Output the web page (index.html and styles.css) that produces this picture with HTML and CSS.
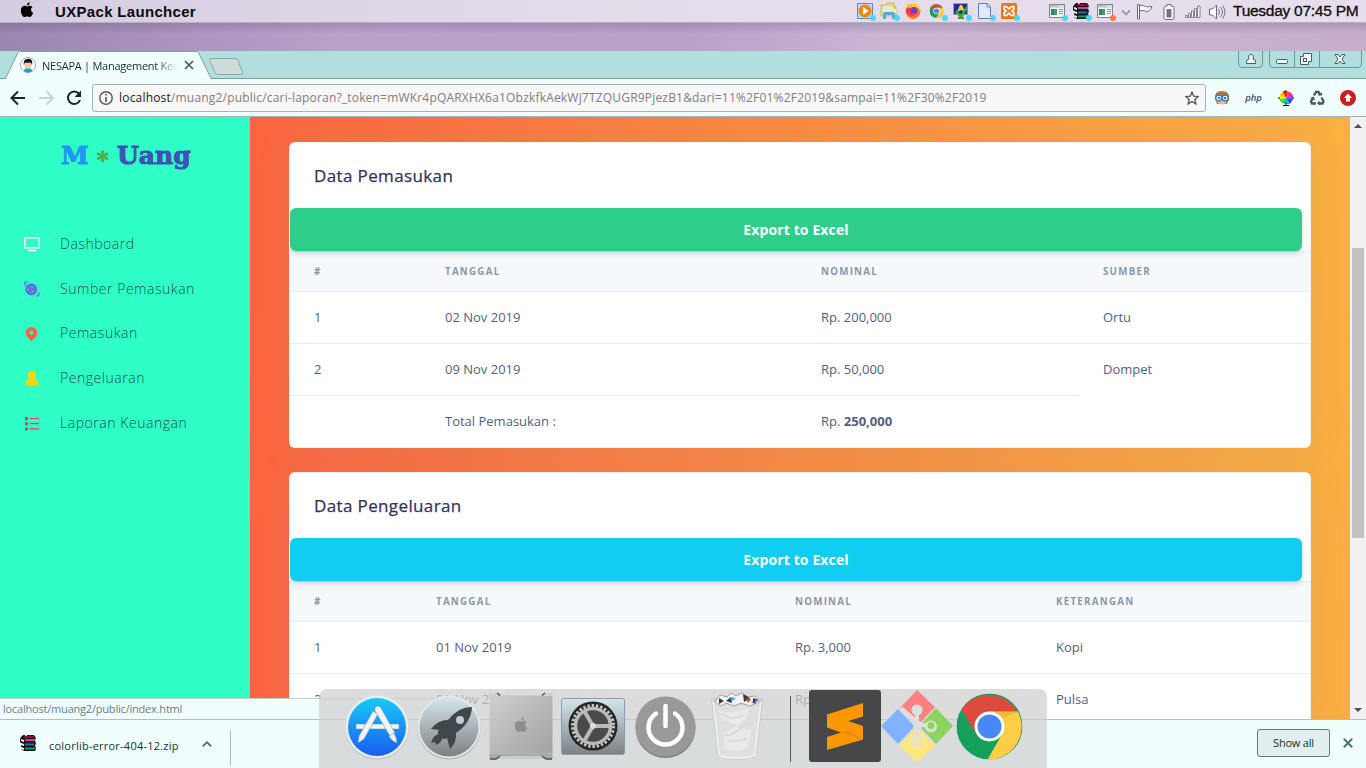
FILE: index.html
```html
<!DOCTYPE html>
<html lang="id">
<head>
<meta charset="utf-8">
<title>NESAPA | Management Keuangan</title>
<link rel="stylesheet" href="styles.css">
</head>
<body>
<svg class="defs" width="0" height="0">
  <defs>
    <symbol id="rar" viewBox="0 0 16 16">
      <path d="M1 2l2-2h11l2 3-1 2 1 4-1 1 1 4-1 2H4l-3-2V11l1-2-2-2V4z" fill="#151515"/>
      <path d="M3 1h10l2 2H5z" fill="#8c0c40"/><path d="M5 4h10v2H5z" fill="#d23a8a"/>
      <path d="M5 8.500h9v2H5z" fill="#1d6fb5"/><path d="M5 12.500h10v2H5z" fill="#189a5c"/>
      <path d="M1 4l3 1v2L1 6zM1 8l3 1v2l-3-1zM1 12l3 1v2l-3-1z" fill="#eee"/>
      <path d="M5 0h2v1H5z" fill="#ffd83a"/>
    </symbol>
    <symbol id="win" viewBox="0 0 18 16">
      <rect x="1.500" y="1.500" width="15" height="13" fill="#f6f8fa" stroke="#7d868d"/>
      <path d="M2 2h14v2.500H2z" fill="#b4c4cf"/><path d="M11 2.500h1.500V4H11zM14 2.500h1.500V4H14z" fill="#fff"/>
      <rect x="3" y="6" width="6" height="6" fill="#33788c"/><path d="M6 6h3v6H6z" fill="#4a9a5c"/>
      <path d="M11 6.500h4M11 8.500h4M11 10.500h4" stroke="#8a949c"/>
    </symbol>
    <symbol id="chrome" viewBox="0 0 66 66">
      <circle cx="33" cy="33" r="33" fill="#159f5c"/>
      <path d="M33 33L5 16A33 33 0 0 1 61 18H33z" fill="#dc4b3e"/>
      <path d="M33 18h28.500A33 33 0 0 1 31 66l14.500-25z" fill="#ffce44"/>
      <path d="M5 16L18.500 39 33 18z" fill="#dc4b3e"/>
      <path d="M33 18h29l-14 6z" fill="#d9a92f" opacity=".5"/>
      <circle cx="33" cy="33" r="15" fill="#fff"/><circle cx="33" cy="33" r="12" fill="#4688f4"/>
    </symbol>
    <symbol id="apple" viewBox="0 0 16 18">
      <path d="M11 0c.2 1.800-1.400 3.700-3.200 3.700C7.600 2 9.200.2 11 0zM8 4.900c.8 0 1.700-.9 3.200-.9 1.300 0 2.500.7 3.200 1.700-2.700 1.700-2.200 5.300.6 6.400-.7 2.100-2.200 4.900-3.900 4.900-1.100 0-1.600-.7-3-.7s-2 .7-3 .7C3.200 17 1 13.200 1 9.800 1 6.200 3.100 4.200 5.200 4.200c1.200 0 2.100.7 2.800.7z"/>
    </symbol>
  </defs>
</svg>

<header class="menubar">
  <svg class="apple" width="14" height="16"><use href="#apple"/></svg>
  <b class="appname">UXPack Launchcer</b>
  <div class="tray">
    <svg class="slot" viewBox="0 0 24 22"><rect x="4.500" y="3.500" width="15" height="15" fill="#b9dcf2" stroke="#5195c4"/><circle cx="12" cy="11" r="6.500" fill="#f6860f"/><path d="M10 7l5.500 4-5.500 4z" fill="#fff"/><circle class="run" cx="20" cy="18" r="3"/></svg>
    <svg class="slot" viewBox="0 0 24 22"><path d="M4 5h5l1-2h7v4h2v9H4z" fill="#efd77c" stroke="#c5a84b" stroke-width=".7"/><path d="M6 6h10v3H6z" fill="#d9f0d0"/><path d="M5 9h14v4H5z" fill="#f9eba9"/><path d="M6 19v-5q0-2 2-2h8q2 0 2 2v5h-3v-4H9v4z" fill="#59a7d8"/><circle class="run" cx="20" cy="18" r="3"/></svg>
    <svg class="slot" viewBox="0 0 24 22"><circle cx="12" cy="11.500" r="7.500" fill="#ff7a28"/><path d="M5 7l2-4 2 3 3-3q8 2 7.500 9-1-3-3-4-3-2-6 0z" fill="#ffc832"/><circle cx="12.500" cy="11" r="4" fill="#753bc4"/><path d="M5 9q3-2 6 0l-2 3q3 3 6 0-1 5-6 4-4-2-4-7z" fill="#ff3b4a"/></svg>
    <svg class="slot" viewBox="0 0 24 22"><use href="#chrome" x="4.500" y="4" width="14" height="14"/><circle class="run" cx="20" cy="18" r="3"/></svg>
    <svg class="slot" viewBox="0 0 24 22"><rect x="4.500" y="3.500" width="14" height="11" fill="#1d2f9a" stroke="#9ba0a8"/><path d="M9 17h6v2H9z" fill="#777"/><path d="M8 12l3-7h2l3 7-4-2z" fill="#f2d91d"/><path d="M7 11l5 6 6-10" fill="none" stroke="#2fae2b" stroke-width="2.500"/><circle class="run" cx="20" cy="18" r="3"/></svg>
    <svg class="slot" viewBox="0 0 24 22"><path d="M5.500 3.500h9l3 3v12h-12z" fill="#dceafd" stroke="#5b81b5"/><path d="M14 3.500V7h3.500" fill="#fff" stroke="#5b81b5"/><circle class="run" cx="20" cy="18" r="3"/></svg>
    <svg class="slot" viewBox="0 0 24 22"><rect x="4" y="3" width="16" height="16" rx="1.500" fill="#ee7416"/><path d="M7.200 6.500h2.300l2.500 2.300 2.500-2.300h2.300v2.800L15 11l1.800 1.700v2.800h-2.300L12 13.200l-2.500 2.300H7.200v-2.800L9 11 7.200 9.300z" fill="none" stroke="#fff" stroke-width="1.700"/><circle class="run" cx="20" cy="18" r="3"/></svg>
    <span class="slot"></span>
    <svg class="slot" viewBox="0 0 24 22"><use href="#win" x="3" y="3" width="18" height="16"/><circle class="run" cx="20" cy="18" r="3"/></svg>
    <svg class="slot" viewBox="0 0 24 22"><use href="#rar" x="4" y="3" width="16" height="16"/><circle class="run" cx="20" cy="18" r="3"/></svg>
    <svg class="slot" viewBox="0 0 24 22"><use href="#win" x="3" y="3" width="18" height="16"/><circle class="run alert" cx="20" cy="18" r="3"/></svg>
    <svg class="chev" viewBox="0 0 16 22"><path d="M5 10.500l4 4 4-4" fill="none" stroke="#9b98a2" stroke-width="1.800"/></svg>
    <svg class="slot" viewBox="0 0 24 22"><path d="M4.500 4.500h2V19h-2zM6.500 6q3-1.500 5 .2 2 1.400 7.500.3-1 3.500-4 5-2 .5-3.500-.8-2-.7-5 .3z" fill="#fff" stroke="#6b6870"/></svg>
    <svg class="slot" viewBox="0 0 24 22"><path d="M10 4.500h4v1.700h1.500q1.500 0 1.500 1.500V18q0 1.500-1.500 1.500h-7Q7 19.500 7 18V7.700q0-1.500 1.500-1.500H10z" fill="#fff" stroke="#6b6870"/><rect x="9.500" y="9" width="5" height="8.500" fill="#77747c"/></svg>
    <svg class="slot" viewBox="0 0 24 22"><path d="M4.500 15.500h2v2h-2zM7.500 13.500h2v4h-2zM10.500 11h2v6.500h-2zM13.500 8.500h2v9h-2zM16.500 6h2.500v11.500h-2.500z" fill="#fff" stroke="#77747c" stroke-width=".9"/></svg>
    <svg class="slot" viewBox="0 0 24 22"><path d="M4.500 9h3l4-4v14l-4-4h-3z" fill="#fff" stroke="#6b6870"/><path d="M13.500 9q2 3 0 6M15.500 7q4 5 0 10M17.500 5.500q5 6.500 0 13" fill="none" stroke="#77747c"/></svg>
    <span class="clock">Tuesday 07:45 PM</span>
  </div>
</header>
<div class="wallpaper"></div>

<div class="tabstrip">
  <div class="tab">
    <svg class="tabshape" width="250" height="28"><path d="M0 28V27.500H5.500L18 1.500Q18.500.500 19.500.500H197Q198 .500 198.500 1.500L211 27.500H250V28z" fill="#f0fffe"/><path d="M0 27.500H5.500L18 1.500Q18.500.500 19.500.500H197Q198 .500 198.500 1.500L211 27.500H250" fill="none" stroke="#7c9f9d"/><path d="M210 7.500H235Q237 7.500 238 9.500L242.500 21.500Q243 23.500 241 23.500H218Q216 23.500 215 21.500L209.500 9.500Q209 7.500 211 7.500z" fill="#cddbda" stroke="#8aa9a7"/></svg>
    <svg class="favicon" width="16" height="16" viewBox="0 0 16 16"><circle cx="8" cy="8" r="7.500" fill="#fff" stroke="#a9a9a9"/><path d="M4 14q0-3 4-3t4 3q-4 3-8 0z" fill="#18a2c8"/><ellipse cx="8" cy="7.800" rx="3.600" ry="4" fill="#f3c9a5"/><path d="M3.800 8Q3 2.500 7 2q5-1 5.300 3.500L12 8q-.5-2-1.500-2.500-3 .5-5 0Q4.200 6 3.800 8z" fill="#15191c"/></svg>
    <span class="tabtitle">NESAPA | Management Keu</span>
    <svg width="10" height="10" viewBox="0 0 10 10"><path d="M1 1l8 8M9 1L1 9" stroke="#3f605d" stroke-width="1.700"/></svg>
  </div>
  <svg class="winctl" width="126" height="18" viewBox="0 0 126 18">
    <g fill="none" stroke="#6f9693"><path d="M2.500 0v13q0 3.500 3.500 3.500h17q3.500 0 3.500-3.500V0"/><path d="M33.500 0v13q0 3.500 3.500 3.500h85q3.500 0 3.500-3.500V0M58.500 0v16M83.500 0v16"/></g>
    <g fill="#eef9f8" stroke="#42605e"><path d="M10.500 12.500v-2q0-2 2.500-2.500-1.500-4.500 2-4.500t2 4.500q2.500.5 2.500 2.500v2z"/><rect x="40.500" y="8.500" width="11" height="4" rx="1"/><path d="M67.500 2.500h8v8h-3v3h-8v-8h3z"/><rect x="67.500" y="7.500" width="3" height="3"/><path d="M99 3.500h3l2 2.500 2-2.500h3L106 8l3 4.500h-3L104 10l-2 2.500h-3L102 8z"/></g>
  </svg>
</div>

<div class="toolbar">
  <svg width="90" height="38" viewBox="0 0 90 38"><path d="M25 19H12.500M18 12.500L11.500 19l6.500 6.500" fill="none" stroke="#0d2b2a" stroke-width="2"/><path d="M39 19h13M46.500 12.500L53 19l-6.500 6.500" fill="none" stroke="#c4d6d5" stroke-width="2"/><path d="M79 14.800A6.200 6.200 0 1 0 80 21" fill="none" stroke="#0d2b2a" stroke-width="2"/><path d="M81 11.500v6.500h-6.500z" fill="#0d2b2a"/></svg>
  <div class="omnibox">
    <svg width="14" height="14" viewBox="0 0 14 14"><circle cx="7" cy="7" r="6.200" fill="none" stroke="#555" stroke-width="1.400"/><path d="M6.200 3h1.600v1.600H6.200zM6.200 6h1.600v5H6.200z" fill="#555"/></svg>
    <span class="url"><b>localhost</b>/muang2/public/cari-laporan?_token=mWKr4pQARXHX6a1ObzkfkAekWj7TZQUGR9PjezB1&amp;dari=11%2F01%2F2019&amp;sampai=11%2F30%2F2019</span>
    <svg class="star" width="14" height="14" viewBox="0 0 14 14"><path d="M7 1l1.700 4.200 4.600.3-3.500 3 1.100 4.400L7 10.500l-3.900 2.400 1.100-4.400-3.500-3 4.600-.3z" fill="none" stroke="#555" stroke-width="1.300"/></svg>
  </div>
  <div class="exts">
    <svg width="16" height="16" viewBox="0 0 16 16"><path d="M1 9Q0 1 8 1t7 8l-2 5H3z" fill="#b9772f"/><path d="M3 6h10v6q-5 5-10 0z" fill="#f0b98a"/><circle cx="4.800" cy="8" r="3" fill="#dff2ff" stroke="#2e7fd0" stroke-width="1.300"/><circle cx="11.200" cy="8" r="3" fill="#dff2ff" stroke="#2e7fd0" stroke-width="1.300"/><circle cx="5" cy="8" r="1" fill="#12457c"/><circle cx="11" cy="8" r="1" fill="#12457c"/></svg>
    <span class="php">php</span>
    <svg width="16" height="16" viewBox="0 0 16 16"><path d="M8 8V1l4 1z" fill="#ff4b00"/><path d="M8 8l4-6 3 3z" fill="#ff20a0"/><path d="M8 8l7-3v4z" fill="#c02aff"/><path d="M8 8l7 1-3 5z" fill="#2442ff"/><path d="M8 8l4 6H8z" fill="#00b7e8"/><path d="M8 8v6l-4-1z" fill="#10c860"/><path d="M8 8l-4 5-3-4z" fill="#3be01c"/><path d="M8 8L1 9l1-4z" fill="#e8ec00"/><path d="M8 8L2 5l3-4z" fill="#ffb400"/><path d="M8 8L5 1h3z" fill="#e80000"/><path d="M8 0v2M8 13v3M0 8h2M14 8h2M5 15.500h6" stroke="#111"/></svg>
    <svg width="16" height="16" viewBox="0 0 16 16"><g fill="none" stroke="#4c5460" stroke-width="2.300"><path d="M5 5.500L7 2h2.500l1.500 3"/><path d="M12.500 7.500l2 4-1 2H10"/><path d="M7 13.500H3l-1-2 2-3.500"/></g><path d="M9 5.500h4V2zM10.500 10.500v5L8 13zM1 8l4-1.500 1 4z" fill="#4c5460"/></svg>
    <svg width="16" height="16" viewBox="0 0 16 16"><circle cx="8" cy="8" r="8" fill="#c9201f"/><path d="M8 3.500L12 8h-2v3.500H6V8H4z" fill="#fff"/></svg>
  </div>
</div>

<div class="viewport">
  <aside class="sidebar">
    <div class="logo"><span class="m">M</span><span class="dot">*</span><span class="u">Uang</span></div>
    <nav>
      <a><svg width="16" height="16" viewBox="0 0 16 16"><path d="M.8 1.800h14.400v10H.8z" fill="none" stroke="#fff" stroke-width="1.500"/><path d="M4 14.500h8" stroke="#fff" stroke-width="1.500"/></svg>Dashboard</a>
      <a><svg width="16" height="16" viewBox="0 0 16 16"><circle cx="7.300" cy="8.500" r="6" fill="#5e72e4"/><path d="M4 1.200Q0 0 1 3.500l1 2M12 14.800q4 .5 2.700-3.300" fill="none" stroke="#5e72e4" stroke-width="1.300"/><g fill="#2dffc5"><circle cx="8" cy="6" r=".8"/><circle cx="4" cy="8.500" r=".8"/><circle cx="8.500" cy="10.500" r=".8"/></g></svg>Sumber Pemasukan</a>
      <a><svg width="16" height="16" viewBox="0 0 16 16"><path fill-rule="evenodd" d="M7.500 1a5.700 5.700 0 0 1 5.700 5.700c0 3-3 6-5.700 8.600-2.700-2.600-5.700-5.600-5.700-8.600A5.700 5.700 0 0 1 7.500 1zm0 3.700a2 2 0 1 0 0 4 2 2 0 0 0 0-4z" fill="#fb6340"/></svg>Pemasukan</a>
      <a><svg width="16" height="16" viewBox="0 0 16 16"><circle cx="8" cy="5" r="4.200" fill="#ffd600"/><path d="M1.500 15.500q0-6 4-6h5q4 0 4 6z" fill="#ffd600"/></svg>Pengeluaran</a>
      <a><svg width="16" height="16" viewBox="0 0 16 16"><path d="M1 2h3v3H1zM1 7.200h3v3H1zM1 12.400h3v3H1z" fill="#f5365c"/><path d="M6 3.500h9M6 8.700h9M6 13.900h9" stroke="#f5365c" stroke-width="1.200"/></svg>Laporan Keuangan</a>
    </nav>
  </aside>
  <main class="main">
    <section class="card">
      <h3>Data Pemasukan</h3>
      <a class="btn green">Export to Excel</a>
      <table class="t1">
        <thead><tr><th class="c1">#</th><th class="c2">Tanggal</th><th class="c3">Nominal</th><th>Sumber</th></tr></thead>
        <tbody>
          <tr><td>1</td><td>02 Nov 2019</td><td>Rp. 200,000</td><td>Ortu</td></tr>
          <tr><td>2</td><td>09 Nov 2019</td><td>Rp. 50,000</td><td>Dompet</td></tr>
          <tr><td></td><td>Total Pemasukan :</td><td>Rp. <b>250,000</b></td></tr>
        </tbody>
      </table>
    </section>
    <section class="card">
      <h3>Data Pengeluaran</h3>
      <a class="btn blue">Export to Excel</a>
      <table class="t2">
        <thead><tr><th class="c1">#</th><th class="c2">Tanggal</th><th class="c3">Nominal</th><th>Keterangan</th></tr></thead>
        <tbody>
          <tr><td>1</td><td>01 Nov 2019</td><td>Rp. 3,000</td><td>Kopi</td></tr>
          <tr><td>2</td><td>01 Nov 2019</td><td>Rp.</td><td>Pulsa</td></tr>
        </tbody>
      </table>
    </section>
  </main>
  <div class="scroll">
    <svg width="16" height="17" viewBox="0 0 16 17"><path d="M4 11l4-4 4 4z" fill="#505050"/></svg>
    <div class="thumb"></div>
    <svg class="down" width="16" height="17" viewBox="0 0 16 17"><path d="M4 6l4 4 4-4z" fill="#505050"/></svg>
  </div>
  <div class="status">localhost/muang2/public/index.html</div>
</div>

<footer class="downloads">
  <svg class="zip" width="16" height="16"><use href="#rar"/></svg>
  <span class="file">colorlib-error-404-12.zip</span>
  <svg class="up" width="10" height="6" viewBox="0 0 10 6"><path d="M.8 5.300L5 1.200l4.200 4.100" fill="none" stroke="#4a6a67" stroke-width="1.700"/></svg>
  <span class="rule"></span>
  <span class="showall">Show all</span>
  <svg class="close" width="10" height="10" viewBox="0 0 10 10"><path d="M.8.8l8.400 8.400M9.200.8L.8 9.200" stroke="#4f7370" stroke-width="2"/></svg>
</footer>

<div class="dock">
  <svg width="72" height="72" viewBox="0 0 72 72">
    <defs><linearGradient id="ga" x2="0" y2="1"><stop stop-color="#17c9fb"/><stop offset="1" stop-color="#1a5cf0"/></linearGradient><linearGradient id="gr" x2="0" y2="1"><stop stop-color="#d4e6ec"/><stop offset="1" stop-color="#7d8182"/></linearGradient><linearGradient id="gt" x2="1" y2="1"><stop stop-color="#cfcfcf"/><stop offset="1" stop-color="#a2a2a2"/></linearGradient></defs>
    <circle cx="36" cy="38" r="31.500" fill="#b5b9ba"/><circle cx="36" cy="37" r="31.500" fill="#eceeee"/><circle cx="36" cy="37" r="29" fill="url(#ga)"/>
    <g fill="#f3f3f3" stroke="#5a8ec0" stroke-width=".5"><path d="M15 34h43v5H15z"/><path d="M32 21l5 3-14 25-6 4 1-7z"/><path d="M34 18q3-4 6 0l14 25-5 3-15-25z"/><path d="M48 46l5-3q3 5 3 10-6-2-8-7z"/></g>
  </svg>
  <svg width="72" height="72" viewBox="0 0 72 72"><circle cx="36" cy="38" r="31.500" fill="#a5a9aa"/><circle cx="36" cy="37" r="31.500" fill="#e4e8e9"/><circle cx="36" cy="37" r="29.500" fill="url(#gr)"/><path d="M59 17q-14 0-24 13-10 0-17 9l8 1q-2 2-1 4l6 5q2 0 3-1l3 11q7-7 6-16 15-10 16-26zM26 44q-6 1-8 9l4-1 1 3q6-3 7-8z" fill="#414648"/><circle cx="47" cy="30" r="4" fill="#c0cdd1"/></svg>
  <svg width="72" height="72" viewBox="0 0 72 72"><path d="M4.500 5.500h63v58h-63z" fill="url(#gt)"/><path d="M4.500 3h6l5 3h41l5-3h6v3h-63z" fill="#d0d0d0"/><path d="M12 3l3 2.500M60 3l-3 2.500" fill="none" stroke="#505050" stroke-width="1.500"/><path d="M4.500 63.500h63V69h-6l-4-3h-43l-4 3h-6z" fill="#aaa"/><path d="M16 66h40l4 3H12z" fill="#c9cccc"/><path d="M5 69h6l4-3M67 69h-6l-4-3" fill="none" stroke="#505050" stroke-width="1.300"/><use href="#apple" x="29" y="27" width="14" height="16" fill="#8d8d8d"/></svg>
  <svg width="72" height="72" viewBox="0 0 72 72"><rect x="4.500" y="8.500" width="63" height="56" rx="2" fill="url(#gr)" stroke="#829fb3"/><circle cx="36" cy="36" r="24.500" fill="#252626"/><circle cx="36" cy="36" r="20.500" fill="none" stroke="#c5c5c5" stroke-width="3" stroke-dasharray="2.500 1.800"/><circle cx="36" cy="36" r="17.500" fill="#494a4a" stroke="#bababa" stroke-width="3.500"/><path d="M36 36H53M36 36L27.500 21.500M36 36l-8.500 14.500" stroke="#bababa" stroke-width="4"/><circle cx="36" cy="36" r="3" fill="#ddd"/></svg>
  <svg width="72" height="72" viewBox="0 0 72 72"><circle cx="36.500" cy="38" r="30" fill="#7f7f7f"/><circle cx="36.500" cy="36.500" r="30" fill="#999"/><path d="M27 23.500a17 17 0 1 0 19 0M36.500 16v20" fill="none" stroke="#fff" stroke-width="4.500" stroke-linecap="round"/></svg>
  <svg width="72" height="72" viewBox="0 0 72 72"><path d="M10.500 9h51l-6.500 55q-1 5-19 5t-19-5z" fill="#dfdfdf" stroke="#c6c6c6"/><path d="M12 11l6 53q1 4 18 4t18-4l6-53" fill="none" stroke="#f4f4f4" stroke-width="1.500"/><path d="M18 20q8 4 17 1l14-3-5 12-8 6-14-6zM22 44l12-7 16 3-4 18-10 4-12-3z" fill="#e9e9e9"/><path d="M22 24q9 8 20 1M45 32q-8 12-22 14M28 50q8 3 18-2" stroke="#d6d6d6" stroke-width="1.500" fill="none"/><ellipse cx="36" cy="10" rx="25.500" ry="5" fill="#cfcfcf"/><path d="M14 12l5-7 7 2 4-4 5 3 6-3 6 4 7-1 4 6-9 4-9-3-7 3-8-3-5 3z" fill="#f4f4f4" stroke="#888" stroke-width=".7"/><path d="M18 8l5 3-5 3zM42 4l7 4-6 4zM25 11l5-4 1 6zM52 8l5 2-5 3z" fill="#38393a"/><path d="M28 7l7 1-4 3z" fill="#27b5d6"/><path d="M45 8l5 1-3 4z" fill="#c24a26"/><path d="M50 12l6-2-2 4z" fill="#365aa8"/></svg>
  <span class="sep"></span>
  <svg width="72" height="72" viewBox="0 0 72 72"><rect width="72" height="72" rx="3" fill="#474747"/><path d="M18 24.500L54 13v13.500L39 31l15 5v13.500L18 60V47l14-4.500-14-5z" fill="#ff9800"/><path d="M31 42l23 7.500L54 49 39 41z" fill="#e58900"/></svg>
  <svg width="72" height="72" viewBox="0 0 72 72"><path d="M36 0l18 17-14 15-21-14z" fill="#ff8080"/><path d="M17 19l15 16v3L17 54 0 36z" fill="#80b3ff"/><path d="M55 18l17 18-17 18-14-15v-6z" fill="#8dd35f"/><path d="M34 39h4l16 17-18 16-18-16z" fill="#ffe680"/><path d="M20 18l16 14M36 21v27M36 34l13 2" stroke="#dce0df" stroke-width="4"/><circle cx="36" cy="20" r="5.500" fill="#dce0df"/><circle cx="50" cy="36.500" r="6" fill="#dce0df"/><circle cx="50" cy="35.500" r="3.500" fill="#8dd35f"/><circle cx="36" cy="51" r="6" fill="#dce0df"/><circle cx="36" cy="51" r="3.500" fill="#ffe680"/></svg>
  <svg width="72" height="72" viewBox="0 0 72 72"><use href="#chrome" x="3.500" y="3.500" width="66" height="66"/></svg>
</div>
</body>
</html>
```
FILE: styles.css
```css
* { box-sizing: border-box; }
body {
  margin: 0;
  width: 1366px;
  height: 768px;
  overflow: hidden;
  display: flex;
  flex-direction: column;
  position: relative;
  font-family: "Open Sans", "Noto Sans", sans-serif;
}
svg { display: block; flex: none; }
.defs { position: absolute; }

/* system menu bar */
.menubar {
  flex: none;
  height: 23px;
  display: flex;
  align-items: center;
  padding: 0 8px 0 20px;
  background: linear-gradient(90deg, #d6cce1, #e5dcea 45%, #e6deed);
  border-bottom: 1px solid #b7adc0;
  font-family: "Liberation Sans", Arial, sans-serif;
  color: #0b0b0b;
}
.apple { margin-top: -3px; }
.appname { margin-left: 21px; font-size: 15px; letter-spacing: .32px; white-space: nowrap; }
.tray { margin-left: auto; display: flex; align-items: center; height: 22px; }
.slot { width: 24px; height: 22px; }
.chev { width: 16px; height: 22px; }
.run { fill: #4bd6f2; }
.run.alert { fill: #f57b4f; }
.clock { width: 129px; padding-left: 4px; font-size: 15.500px; letter-spacing: -.26px; white-space: nowrap; -webkit-text-stroke: .3px #0b0b0b; }
.wallpaper {
  flex: none;
  height: 28px;
  background: linear-gradient(180deg, rgba(70, 50, 90, .2), transparent 40%), linear-gradient(90deg, #9b86b0, #b8a2ca 25%, #b9a0c8 50%, #cbb5d5 65%, #c7aecb);
}

/* browser chrome */
.tabstrip { flex: none; height: 28px; background: #b1dfdd; display: flex; justify-content: space-between; border-bottom: 1px solid #7c9f9d; }
.tab { position: relative; width: 250px; height: 28px; display: flex; align-items: center; padding-left: 20px; }
.tab > * { position: relative; }
.tab .tabshape { position: absolute; left: 0; top: 0; }
.tabtitle {
  margin: 0 6px 0 6px;
  width: 136px;
  white-space: nowrap;
  font-size: 11px;
  letter-spacing: -.25px;
  color: #17302e;
  -webkit-mask-image: linear-gradient(90deg, #000 84%, transparent);
}
.winctl { margin-right: 4px; margin-left: auto; }
.toolbar { flex: none; height: 38px; background: #f0fffe; border-bottom: 1px solid #a4b4b3; display: flex; align-items: center; }
.omnibox { width: 1114px; height: 28px; margin-left: 2px; border: 1px solid #a3b3b2; border-radius: 3px; background: #f7f7f7; display: flex; align-items: center; padding: 0 6px; }
.url { margin-left: 6px; font-size: 12px; letter-spacing: .19px; color: #808080; white-space: nowrap; }
.url b { font-weight: 400; color: #222; }
.star { margin-left: auto; }
.exts { display: flex; align-items: center; justify-content: space-between; width: 142px; margin-left: 8px; }
.php { width: 17px; font: italic 600 9.500px "Open Sans", sans-serif; letter-spacing: -.1px; color: #3d4378; }

/* web page */
.viewport { flex: none; height: 602px; display: flex; position: relative; overflow: hidden; }
.sidebar { width: 250px; background: #2dffc5; flex: none; }
.logo { height: 104px; padding: 21px 0 0 61px; display: flex; font: bold 25px/36px "DejaVu Serif", serif; }
.logo .m { color: #2196f3; width: 36px; -webkit-text-stroke: 1px #2196f3; }
.logo .dot { color: #4caf50; width: 20px; font-size: 22px; line-height: 42px; -webkit-text-stroke: 1px #4caf50; }
.logo .u { color: #3f51b5; font-size: 25px; letter-spacing: 0; -webkit-text-stroke: 1px #3f51b5; }
.sidebar nav { display: flex; flex-direction: column; }
.sidebar a { height: 44.700px; display: flex; align-items: center; padding-left: 24px; gap: 20px; font-size: 14px; font-weight: 300; letter-spacing: .54px; color: #1b5250; white-space: nowrap; }
.sidebar a svg { margin-top: 2px; }
.main {
  width: 1100px;
  flex: none;
  padding: 25px 39px 0;
  display: flex;
  flex-direction: column;
  gap: 24px;
  background: linear-gradient(87deg, #fb6340, #fbb140);
}
.card { flex: none; background: #fff; border: 1px solid rgba(0, 0, 0, .05); border-radius: 6px; box-shadow: 0 0 32px rgba(136, 152, 170, .15); overflow: hidden; }
.card h3 { margin: 0; height: 65px; padding-left: 24px; line-height: 66px; font-size: 17px; font-weight: 500; letter-spacing: .37px; color: #32325d; -webkit-text-stroke: .25px #32325d; }
.btn {
  display: block;
  position: relative;
  width: 1012px;
  height: 43px;
  line-height: 43px;
  border-radius: 6px;
  text-align: center;
  color: #fff;
  font-size: 14px;
  font-weight: 700;
  letter-spacing: .12px;
  box-shadow: 0 4px 6px rgba(50, 50, 93, .11), 0 1px 3px rgba(0, 0, 0, .12);
}
.green { background: #2dce89; }
.blue { background: #11cdef; }
table { width: 1020px; table-layout: fixed; border-collapse: separate; border-spacing: 0; }
th, td { padding: 0 24px 2px; text-align: left; white-space: nowrap; }
th { height: 41px; padding-bottom: 0; background: #f6f9fc; border-top: 1px solid #e9ecef; border-bottom: 1px solid #e9ecef; font-size: 9.750px; font-weight: 700; letter-spacing: 1.250px; text-transform: uppercase; color: #8898aa; }
td { height: 52px; font-size: 13px; color: #525f7f; border-bottom: 1px solid #e9ecef; }
.t1 tr:nth-child(2) td:last-child, .t1 tr:last-child td { border-bottom: 0; }
.t1 tbody tr:last-child td { height: 51px; }
.t1 .c1 { width: 131px; }
.t1 .c2 { width: 376px; }
.t1 .c3 { width: 282px; }
.t2 .c1 { width: 122px; }
.t2 .c2 { width: 359px; }
.t2 .c3 { width: 261px; }
.scroll { width: 16px; background: #f1f1f1; display: flex; flex-direction: column; }
.thumb { width: 12px; height: 290px; margin: 114px 2px 0; background: #c1c1c1; }
.down { margin-top: auto; }
.status { position: absolute; left: 0; bottom: 0; width: 452px; height: 21px; padding-left: 3px; border-top: 1px solid #c4cfce; background: #f0fffe; font-size: 11px; letter-spacing: -.2px; line-height: 20px; color: #66807e; }

/* download shelf */
.downloads { flex: 1; border-top: 1px solid #b4bebd; background: #f0fffe; display: flex; align-items: center; padding: 0 13px 0 20px; }
.zip { margin-top: -2px; }
.file { width: 130px; margin: 3px 0 0 13px; font-size: 11px; letter-spacing: .23px; color: #17302e; white-space: nowrap; }
.up { margin-left: 23px; }
.rule { width: 1px; height: 36px; margin-left: 18px; margin-top: 7px; background: #a9b8b7; }
.showall { margin-left: auto; margin-right: 13px; margin-top: -2px; width: 73px; height: 28px; border: 1px solid #5c7c79; border-radius: 3px; background: #e3efee; font-size: 11px; letter-spacing: -.2px; line-height: 26px; text-align: center; color: #17302e; }
.close { margin-top: -2px; }

/* dock floats over the desktop */
.dock { position: absolute; left: 319px; top: 689px; width: 728px; height: 79px; padding: 1px 22px; display: flex; border-radius: 8px 8px 0 0; background: rgba(207, 207, 207, .72); }
.sep { width: 1px; height: 66px; margin: 6px 18px 0 17px; background: #555; }
```
